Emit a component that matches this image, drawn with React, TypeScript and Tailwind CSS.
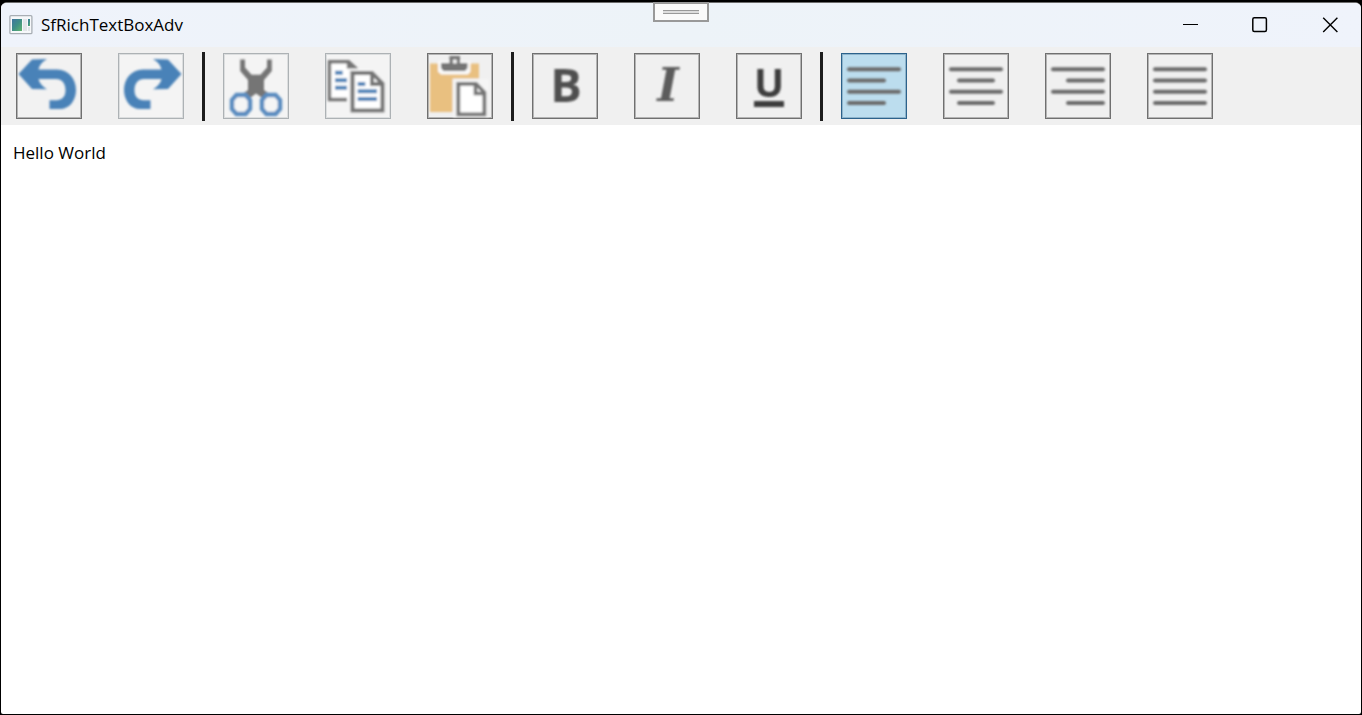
import React, { useState } from 'react'

type Align = 'left' | 'center' | 'right' | 'justify'

const BLUE = '#4a82b8'
const GRAY = '#757575'

const alignLines: Record<Align, [number, number][]> = {
  left: [[8, 58], [8, 43], [8, 58], [8, 43]],
  center: [[8, 58], [16, 50], [8, 58], [16, 50]],
  right: [[8, 58], [23, 58], [8, 58], [23, 58]],
  justify: [[8, 58], [8, 58], [8, 58], [8, 58]],
}

function Icon({ children }: { children: React.ReactNode }) {
  return (
    <svg viewBox="1 1 64 64" className="block h-16 w-16 overflow-visible" aria-hidden="true">
      <defs>
        <filter id="soft" x="-10%" y="-10%" width="120%" height="120%">
          <feGaussianBlur stdDeviation="0.9" />
        </filter>
      </defs>
      <g filter="url(#soft)">{children}</g>
    </svg>
  )
}

const arrow =
  'M2.5 21 L16 6.5 L31 6 C26 9 23.5 12 22.5 16.5 H41 C53 17 60 26 60 37 C60 48 53 56 44 56 H33.5 V47.3 H41 C47 46.5 49.5 43 49.5 37 C49.5 30.5 46 26 40 26 H22.5 C23.5 30 26 33.5 31 36.3 L16 36 Z'

const UndoIcon = () => (
  <Icon>
    <path d={arrow} fill={BLUE} />
  </Icon>
)

const RedoIcon = () => (
  <Icon>
    <path d={arrow} fill={BLUE} transform="translate(66 0) scale(-1 1)" />
  </Icon>
)

const CutIcon = () => (
  <Icon>
    <path
      d="M17.2 6.5 H22 V14.5 L28.5 21.7 H37.5 L44 14.5 V6.5 H48.8 V18 L41 27 V37 L46.5 41 L41.5 46.5 L33 40.5 L25 46.5 L19.5 41 L25 37 V27 L17.2 18 Z"
      fill={GRAY}
    />
    <g fill="#f5f5f5" stroke="#5a8cc0" strokeWidth="4.4">
      <path d="M13.5 42 H22.5 L27 47 V56 L22.5 61 H13.5 L9 56 V47 Z" />
      <path d="M43.5 42 H52.5 L57 47 V56 L52.5 61 H43.5 L39 56 V47 Z" />
    </g>
  </Icon>
)

const CopyIcon = () => (
  <Icon>
    <path d="M5 8.5 H24 L30 13 V47 H5 Z" fill="#fff" />
    <path d="M22 46.5 H4.5 V8.8 H23.5 L29 13.8 H23.5 V8" fill="none" stroke={GRAY} strokeWidth="3.4" />
    <path d="M10 19.7 H17.7 M10 27.3 H22 M10 34.7 H22" stroke={BLUE} strokeWidth="4" />
    <path d="M23.5 16 H47 L61 28 V61 H23.5 Z" fill="#f5f5f5" />
    <path d="M27.5 20 H47 L57.5 30.5 V57.4 H27.5 Z" fill="#fff" stroke={GRAY} strokeWidth="4" />
    <path d="M47 20 V31 H58" fill="none" stroke={GRAY} strokeWidth="3.8" />
    <path d="M32.7 31 H40.3 M32.7 38.3 H52 M32.7 46 H52" stroke={BLUE} strokeWidth="4" />
  </Icon>
)

const PasteIcon = () => (
  <Icon>
    <path d="M3 10.5 H52 V25.5 H25.5 V59 H3 Z" fill="#e9c080" />
    <path d="M11 8 H43.5 V18.5 L41 21.5 H14 L11 18.5 Z" fill="#fafafa" />
    <path d="M22.5 3 H33 V10 H40.5 V15 L38 18 H16.5 L14 15 V10 H22.5 Z" fill={GRAY} />
    <path d="M26 6.5 H29.8 V10.5 H26 Z" fill="#f5f5f5" />
    <path d="M26 26 H62 V64 H26 Z" fill="#f5f5f5" />
    <path d="M31.3 30.8 H49 L57.4 39.5 V61.3 H31.3 Z" fill="#fff" stroke={GRAY} strokeWidth="3.8" />
    <path d="M48.5 31 V40.5 H57" fill="none" stroke={GRAY} strokeWidth="3.6" />
  </Icon>
)

const BoldIcon = () => (
  <Icon>
    <text x="34" y="48.5" textAnchor="middle" className="fill-[#505050] font-['Open_Sans'] text-[47px] font-bold">B</text>
  </Icon>
)

const ItalicIcon = () => (
  <Icon>
    <text x="34" y="48" textAnchor="middle" className="fill-[#5c5c5c] font-['DejaVu_Serif'] text-[46px] font-bold italic">I</text>
  </Icon>
)

const UnderlineIcon = () => (
  <Icon>
    <text x="33" y="44" textAnchor="middle" className="fill-[#3c3c3c] font-['Open_Sans'] text-[40px] font-bold">U</text>
    <rect x="18" y="48" width="30" height="6" fill="#3c3c3c" />
  </Icon>
)

const AlignIcon = ({ align }: { align: Align }) => (
  <Icon>
    {alignLines[align].map(([from, to], i) => (
      <line
        key={i}
        x1={from}
        x2={to}
        y1={16.3 + i * 11.2}
        y2={16.3 + i * 11.2}
        stroke="#6b6b6b"
        strokeWidth="4"
        strokeLinecap="round"
      />
    ))}
  </Icon>
)

interface ToolButtonProps {
  label: string
  look?: 'normal' | 'faded' | 'light' | 'pressed'
  pressed?: boolean
  onClick?: () => void
  children: React.ReactNode
}

const looks = {
  normal: 'border-[#707070] bg-[#f0f0f0] inset-ring-[#b4b4b4]',
  light: 'border-[#707070] bg-[#f2f2f2] inset-ring-[#b4b4b4]',
  faded: 'border-[#adb2b5] bg-[#f4f4f4] inset-ring-[#dcdedf]',
  pressed: 'border-[#2c628b] bg-[#bcddee] inset-ring-[#8fb4cb]',
}

function ToolButton({ label, look = 'normal', pressed, onClick, children }: ToolButtonProps) {
  return (
    <button
      type="button"
      aria-label={label}
      aria-pressed={pressed}
      onClick={onClick}
      className={`shrink-0 border inset-ring ${looks[look]}`}
    >
      {children}
    </button>
  )
}

const Separator = () => <div className="w-[3px] shrink-0 self-stretch bg-[#1c1c1c]" />

const AppIcon = () => (
  <svg width="24" height="20" viewBox="0 0 24 20" aria-hidden="true">
    <defs>
      <linearGradient id="pane" x1="0" y1="0" x2="1" y2="1">
        <stop offset="0" stopColor="#3f74a0" />
        <stop offset="0.5" stopColor="#3f8f86" />
        <stop offset="1" stopColor="#62b56c" />
      </linearGradient>
    </defs>
    <rect x="0.9" y="0.7" width="22" height="18" rx="1" fill="#f6f8fa" stroke="#a8aeb4" strokeWidth="1.3" />
    <rect x="3" y="4" width="10" height="12" fill="url(#pane)" />
    <rect x="14" y="4" width="4" height="12" fill="#e2e5e8" />
    <rect x="19" y="4" width="2" height="7" fill="url(#pane)" />
    <rect x="19" y="12" width="2" height="4" fill="#e2e5e8" />
  </svg>
)

export default function App() {
  const [align, setAlign] = useState<Align>('left')

  return (
    <div className="flex min-h-screen flex-col bg-black px-px pt-0.5 pb-px font-['Open_Sans','Noto_Sans',sans-serif] text-black">
      <main className="relative flex flex-1 flex-col overflow-hidden rounded-t-md rounded-b-xs border-t border-[#6c6c6c] bg-white">
        <header className="flex h-11 items-stretch justify-between bg-linear-to-r from-[#eff3fb] via-[#edf3f8] to-[#eff3fb] pl-2">
          <div className="flex items-center gap-2">
            <AppIcon />
            <h1 className="text-[17px]">SfRichTextBoxAdv</h1>
          </div>
          <div className="flex gap-2">
            <button type="button" aria-label="Minimize" className="flex w-[62px] items-center justify-center">
              <svg width="16" height="16" viewBox="0 0 16 16" stroke="#000" strokeWidth="1.2">
                <path d="M1 7.5 H16" />
              </svg>
            </button>
            <button type="button" aria-label="Maximize" className="flex w-[62px] items-center justify-center">
              <svg width="16" height="16" viewBox="0 0 16 16" fill="none" stroke="#000" strokeWidth="1.5">
                <rect x="0.8" y="0.8" width="13.6" height="13.6" rx="1.5" />
              </svg>
            </button>
            <button type="button" aria-label="Close" className="flex w-[62px] items-center justify-center">
              <svg width="16" height="16" viewBox="0 0 16 16" stroke="#000" strokeWidth="1.4">
                <path d="M1.2 0.8 L15.4 15 M15.4 0.8 L1.2 15" />
              </svg>
            </button>
          </div>
        </header>

        <div role="toolbar" aria-label="Formatting" className="flex items-center gap-[18px] bg-[#f0f0f0] px-[15px] pt-[5px] pb-1">
          <div className="flex gap-9 pt-px pb-0.5">
            <ToolButton label="Undo" look="light"><UndoIcon /></ToolButton>
            <ToolButton label="Redo" look="faded"><RedoIcon /></ToolButton>
          </div>
          <Separator />
          <div className="flex gap-9 pt-px pb-0.5">
            <ToolButton label="Cut" look="faded"><CutIcon /></ToolButton>
            <ToolButton label="Copy" look="faded"><CopyIcon /></ToolButton>
            <ToolButton label="Paste"><PasteIcon /></ToolButton>
          </div>
          <Separator />
          <div className="flex gap-9 pt-px pb-0.5">
            <ToolButton label="Bold"><BoldIcon /></ToolButton>
            <ToolButton label="Italic"><ItalicIcon /></ToolButton>
            <ToolButton label="Underline"><UnderlineIcon /></ToolButton>
          </div>
          <Separator />
          <div className="flex gap-9 pt-px pb-0.5">
            {(['left', 'center', 'right', 'justify'] as Align[]).map((a) => (
              <ToolButton
                key={a}
                label={`Align ${a}`}
                look={align === a ? 'pressed' : 'normal'}
                pressed={align === a}
                onClick={() => setAlign(a)}
              >
                <AlignIcon align={a} />
              </ToolButton>
            ))}
          </div>
        </div>

        <textarea
          aria-label="Document"
          defaultValue="Hello World"
          spellCheck={false}
          className="w-full flex-1 resize-none px-3 py-4 text-[17px] leading-6 outline-none"
        />
      </main>

      {/* drag handle hanging over the title bar */}
      <div className="absolute top-0.5 left-1/2 flex h-5 w-14 -translate-x-1/2 items-center justify-center border-2 border-[#999] bg-[#fafafa]">
        <div className="h-1 w-9 border-y border-[#999] bg-[#ddd]" />
      </div>
    </div>
  )
}
